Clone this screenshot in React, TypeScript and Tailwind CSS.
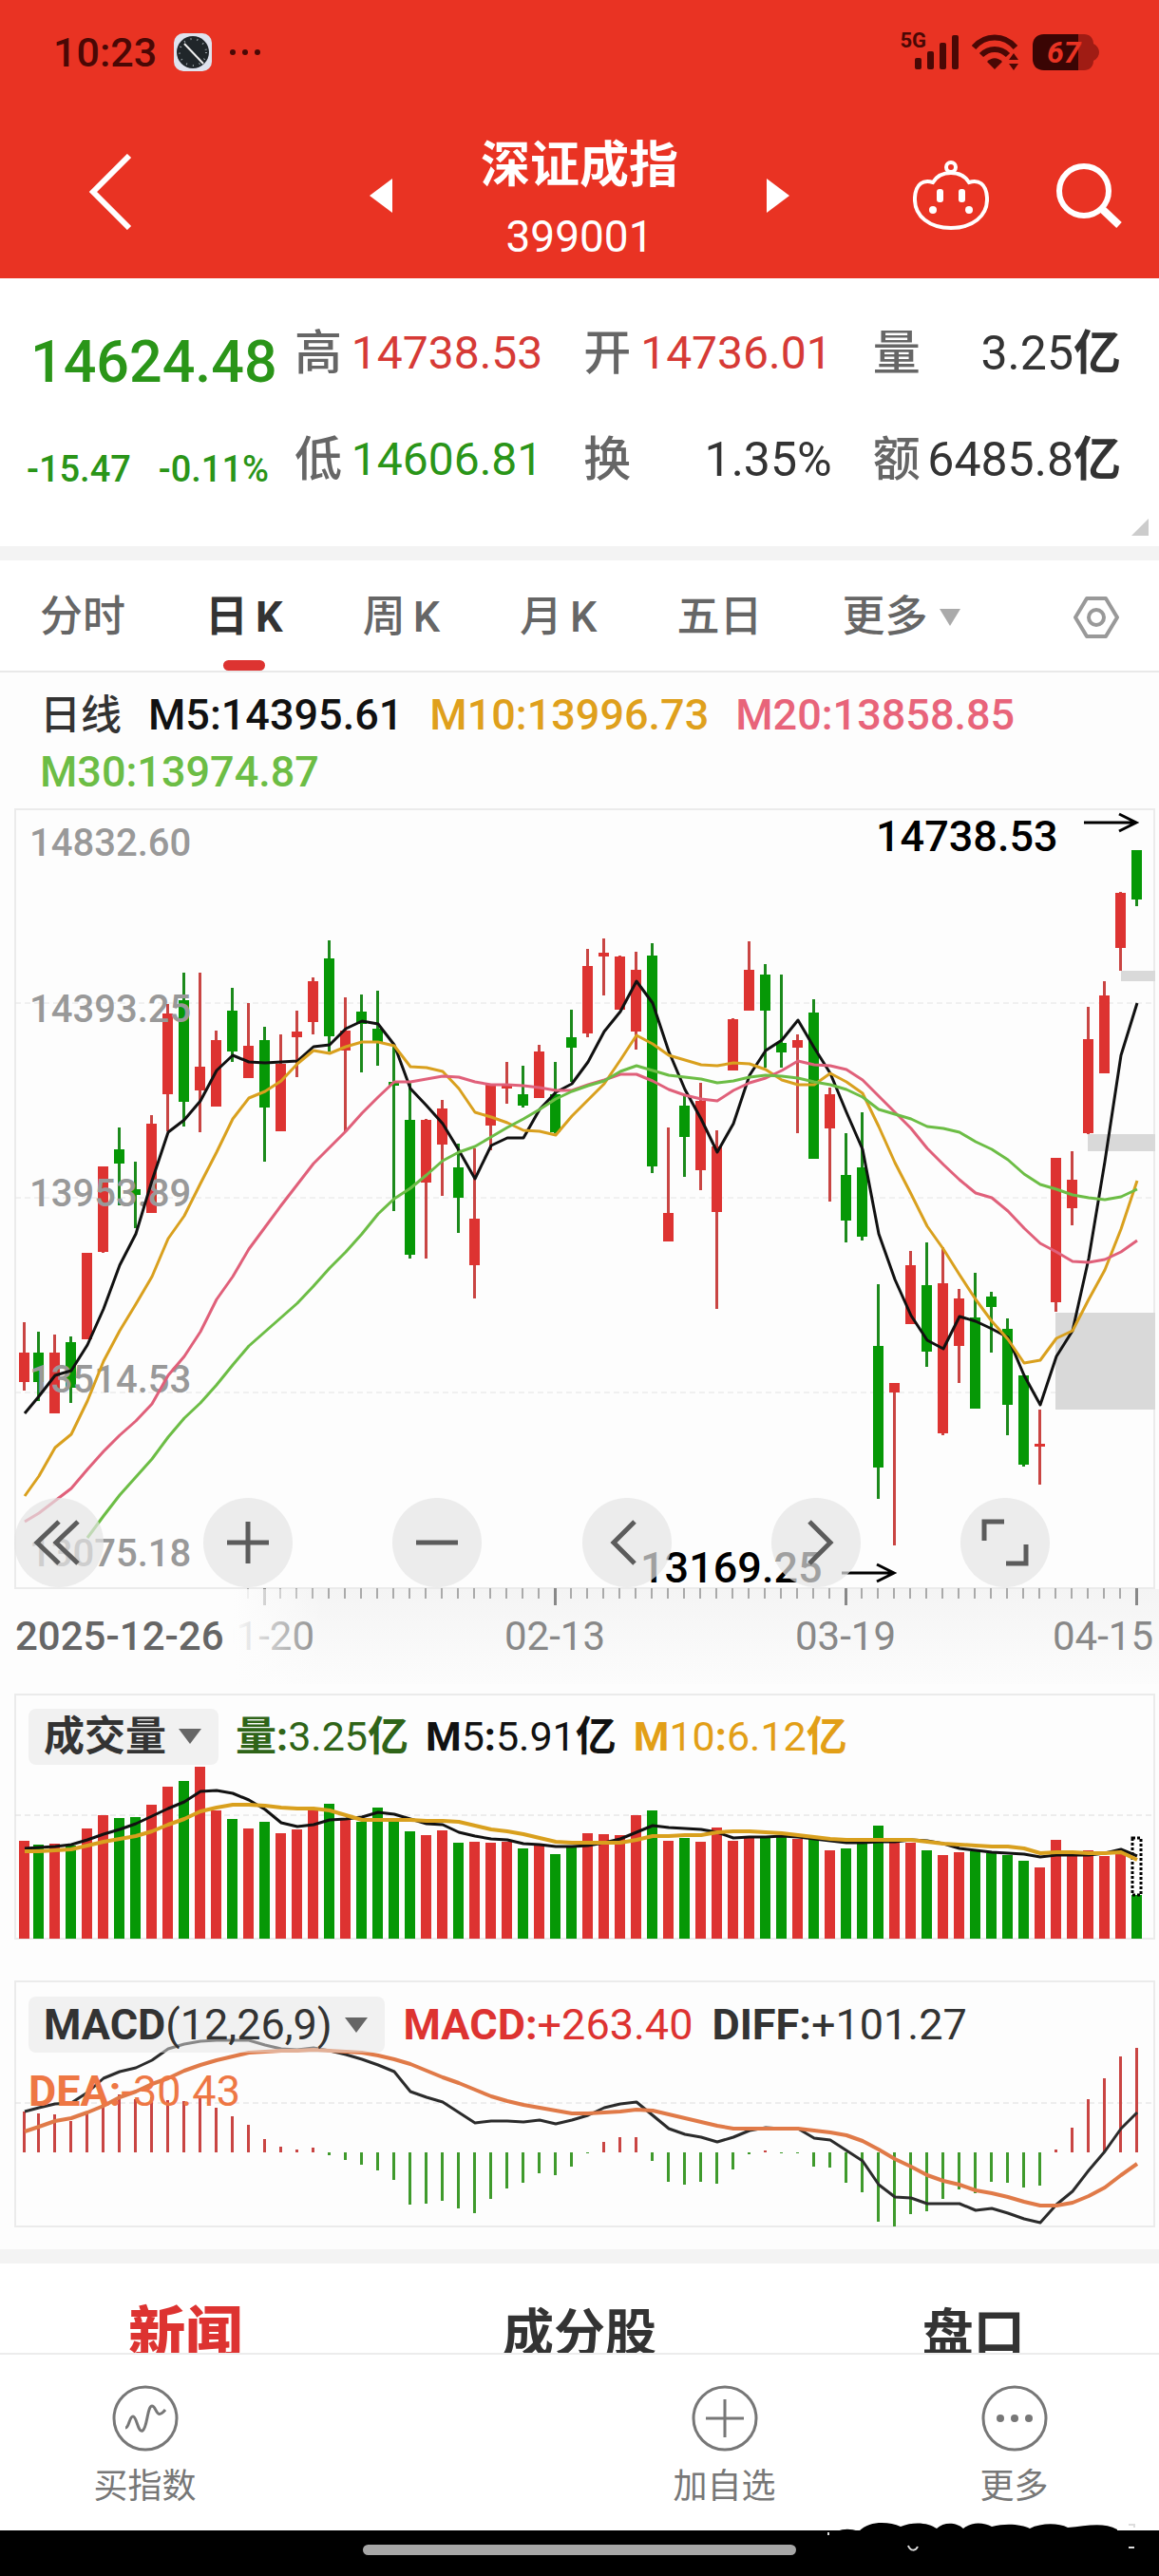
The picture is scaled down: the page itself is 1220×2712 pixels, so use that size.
import { useState, type ReactNode } from "react";

type Candle = [up: number, high: number, top: number, bottom: number, low: number]

const RED = "#dd3331"
const GREEN = "#069806"

const candles: Candle[] = [
    [1, 1029, 1090, 1148, 1164], [0, 1049, 1090, 1148, 1185], [1, 1055, 1090, 1210, 1210], [0, 1057, 1070, 1158, 1188], [1, 894, 894, 1063, 1063],
    [1, 723, 723, 891, 893], [0, 648, 691, 718, 800], [0, 715, 768, 780, 845], [1, 623, 640, 815, 815], [1, 404, 424, 581, 655],
    [0, 343, 398, 597, 645], [1, 343, 528, 574, 656], [1, 457, 476, 606, 607], [0, 373, 418, 497, 518], [1, 402, 487, 550, 550],
    [0, 450, 476, 608, 714], [1, 465, 522, 655, 655], [1, 418, 459, 469, 548], [1, 353, 360, 440, 464], [0, 280, 315, 468, 498],
    [1, 392, 457, 496, 655], [0, 385, 420, 444, 539], [0, 379, 454, 480, 525], [0, 487, 558, 565, 811], [0, 560, 633, 898, 904],
    [1, 631, 633, 755, 904], [1, 594, 609, 681, 781], [0, 679, 726, 785, 854], [1, 688, 827, 918, 983], [1, 562, 564, 643, 692],
    [1, 519, 565, 570, 600], [0, 526, 582, 604, 608], [1, 485, 498, 589, 589], [0, 519, 582, 656, 658], [0, 416, 470, 490, 557],
    [1, 297, 329, 462, 469], [1, 276, 304, 311, 388], [1, 310, 312, 415, 416], [1, 301, 338, 458, 494], [0, 286, 310, 723, 737],
    [1, 648, 816, 871, 871], [0, 585, 605, 665, 744], [1, 559, 595, 731, 770], [1, 653, 685, 813, 1003], [1, 433, 435, 535, 535],
    [1, 282, 338, 417, 417], [0, 327, 346, 417, 529], [0, 347, 482, 499, 529], [1, 465, 476, 490, 658], [0, 396, 422, 708, 709],
    [1, 568, 581, 649, 792], [0, 659, 741, 830, 873], [0, 618, 726, 861, 869], [0, 956, 1077, 1315, 1377], [1, 1150, 1150, 1168, 1468],
    [1, 889, 918, 1034, 1034], [0, 874, 958, 1087, 1117], [1, 883, 954, 1248, 1252], [1, 965, 984, 1076, 1149], [0, 933, 1021, 1199, 1199],
    [0, 971, 980, 1000, 1089], [0, 1023, 1043, 1192, 1252], [0, 1134, 1134, 1309, 1314], [1, 1202, 1268, 1274, 1350], [1, 707, 707, 990, 1010],
    [1, 694, 749, 806, 839], [1, 411, 474, 658, 660], [1, 360, 388, 540, 541], [1, 185, 187, 294, 339], [0, 103, 103, 199, 213],
]

const ma5 = [1210, 1175, 1135, 1126, 1075, 1003, 918, 856, 752, 657, 633, 595, 535, 506, 519, 521, 519, 517, 489, 485, 453, 438, 443, 485, 570, 605, 640, 692, 748, 683, 668, 668, 612, 578, 562, 518, 458, 419, 359, 402, 497, 572, 630, 695, 640, 545, 496, 476, 437, 490, 540, 618, 690, 857, 945, 1017, 1066, 1083, 1018, 1028, 1043, 1060, 1134, 1192, 1097, 1047, 905, 715, 505, 402]
const ma10 = [1371, 1333, 1276, 1250, 1185, 1107, 1047, 995, 940, 866, 820, 757, 695, 630, 589, 577, 555, 523, 496, 501, 488, 479, 480, 487, 527, 529, 537, 570, 617, 626, 637, 653, 655, 663, 624, 594, 562, 514, 467, 483, 506, 515, 524, 526, 521, 522, 533, 553, 564, 564, 541, 557, 580, 645, 717, 778, 842, 886, 936, 985, 1028, 1063, 1110, 1104, 1062, 1046, 985, 928, 847, 752]
const ma20 = [1422, 1405, 1380, 1357, 1320, 1284, 1252, 1224, 1190, 1135, 1097, 1048, 986, 940, 887, 843, 801, 759, 719, 686, 655, 619, 588, 558, 557, 552, 547, 548, 558, 563, 563, 566, 568, 574, 575, 564, 553, 543, 542, 555, 573, 584, 591, 595, 575, 560, 550, 535, 517, 524, 525, 534, 553, 585, 618, 650, 688, 720, 750, 776, 786, 811, 845, 875, 891, 911, 912, 906, 892, 870]
const ma30 = [1453, 1410, 1370, 1335, 1299, 1255, 1219, 1188, 1153, 1114, 1077, 1048, 1021, 992, 959, 924, 892, 857, 818, 788, 767, 740, 713, 695, 685, 666, 648, 630, 611, 592, 577, 566, 555, 538, 526, 536, 544, 548, 552, 559, 556, 548, 545, 546, 551, 558, 563, 573, 588, 611, 621, 631, 645, 650, 656, 675, 691, 711, 738, 760, 768, 780, 786, 789, 784, 768]

const volume = [504, 516, 513, 520, 464, 423, 432, 429, 390, 333, 315, 270, 408, 435, 464, 444, 480, 468, 402, 387, 438, 444, 399, 443, 474, 486, 471, 510, 507, 510, 506, 528, 520, 546, 522, 480, 483, 486, 423, 408, 504, 495, 507, 462, 504, 496, 495, 490, 498, 498, 534, 528, 514, 456, 504, 510, 534, 549, 540, 538, 544, 548, 567, 588, 501, 548, 534, 552, 540, 675]
const volMa5 = [528, 524, 522, 516, 502, 484, 468, 450, 426, 402, 380, 348, 345, 353, 375, 404, 446, 459, 453, 438, 435, 430, 414, 419, 435, 450, 453, 476, 489, 497, 500, 512, 516, 521, 521, 520, 511, 498, 476, 457, 462, 465, 468, 477, 494, 491, 491, 489, 493, 499, 505, 511, 511, 507, 506, 500, 503, 512, 527, 535, 541, 544, 547, 554, 549, 549, 548, 544, 531, 553]
const volMa10 = [537, 536, 534, 531, 518, 508, 497, 488, 473, 453, 436, 411, 399, 390, 390, 392, 399, 402, 403, 408, 422, 437, 437, 437, 438, 440, 440, 443, 455, 467, 473, 483, 495, 508, 510, 511, 510, 509, 501, 490, 488, 486, 485, 477, 475, 475, 476, 479, 485, 493, 497, 500, 501, 500, 501, 502, 507, 512, 516, 519, 521, 522, 527, 542, 541, 541, 543, 543, 541, 563]

const macd = [460, 466, 468, 488, 463, 423, 405, 420, 415, 422, 427, 417, 448, 474, 500, 547, 570, 579, 573, 596, 612, 627, 644, 674, 752, 750, 740, 764, 779, 734, 701, 685, 653, 660, 633, 590, 555, 541, 541, 616, 681, 691, 681, 687, 642, 595, 581, 590, 590, 634, 637, 683, 713, 808, 822, 782, 773, 734, 704, 716, 681, 683, 699, 692, 578, 510, 420, 353, 285, 258]
const diff = [458, 447, 436, 432, 400, 355, 334, 322, 298, 260, 247, 238, 234, 233, 234, 250, 262, 263, 257, 268, 280, 293, 311, 334, 397, 414, 429, 461, 494, 488, 488, 491, 486, 497, 486, 470, 447, 435, 430, 470, 513, 530, 540, 554, 540, 518, 511, 512, 513, 542, 548, 583, 616, 690, 729, 731, 749, 750, 750, 770, 765, 780, 799, 809, 754, 712, 646, 584, 512, 461]
const dea = [521, 506, 490, 480, 463, 440, 415, 395, 373, 353, 331, 312, 297, 284, 273, 269, 266, 266, 265, 267, 269, 273, 282, 294, 309, 329, 350, 370, 390, 410, 425, 437, 448, 457, 464, 466, 461, 458, 453, 455, 467, 480, 492, 504, 513, 513, 512, 512, 513, 519, 525, 535, 552, 579, 609, 633, 659, 677, 691, 708, 718, 729, 744, 757, 757, 747, 725, 698, 661, 623]

const x = (i: number) => (i === 0 ? 25 : 23 + 17 * i)
const priceY = (v: number) => Math.round((v - 20) * 0.5357)
const volY = (v: number) => Math.round((v - 39) / 3)
const macdY = (v: number) => Math.round((v - 45) / 3)

function linePoints(values: number[], y: (v: number) => number, start = 0) {
    return values.map((v, i) => `${x(i + start) + 1},${y(v)}`).join(" ")
}

function Line({ values, y, color, start = 0, width = 3 }: { values: number[], y: (v: number) => number, color: string, start?: number, width?: number }) {
    return <polyline points={linePoints(values, y, start)} fill="none" stroke={color} strokeWidth={width} strokeLinejoin="round" />
}

function StatusBar() {
    return (
        <div className="flex h-[110px] items-center justify-between pl-[56px] pr-[63px] text-[#4a0805]">
            <div className="flex items-center gap-[18px]">
                <span className="text-[43px] font-medium">10:23</span>
                <svg className="size-10" viewBox="0 0 40 40">
                    <rect width="40" height="40" rx="10" fill="#dfe3ee" />
                    <circle cx="20" cy="20" r="17" fill="#20262a" />
                    <circle cx="20" cy="20" r="14" fill="none" stroke="#9aa3a8" strokeWidth="2" strokeDasharray="1 6" />
                    <path d="M11 11 31 32" stroke="#eee" strokeWidth="2" />
                </svg>
                <svg className="h-2 w-[34px]" viewBox="0 0 34 8" fill="currentColor">
                    <circle cx="4" cy="4" r="3" />
                    <circle cx="17" cy="4" r="3" />
                    <circle cx="30" cy="4" r="3" />
                </svg>
            </div>
            <div className="flex items-center gap-[14px]">
                <div className="flex items-start">
                    <span className="-mr-[14px] text-[22px] font-bold leading-4">5G</span>
                    <svg className="h-10 w-[48px]" viewBox="0 0 48 40" fill="currentColor">
                        <rect x="2" y="26" width="7" height="12" rx="2" />
                        <rect x="15" y="19" width="7" height="19" rx="2" />
                        <rect x="28" y="10" width="7" height="28" rx="2" />
                        <rect x="41" y="2" width="7" height="36" rx="2" />
                    </svg>
                </div>
                <svg className="h-10 w-[50px]" viewBox="0 0 50 40" fill="none" stroke="currentColor" strokeWidth="6">
                    <path d="M2 15C14 1 34 1 46 15" />
                    <path d="M10 23c8-8 20-8 28 0" />
                    <path d="m24 38-8-8c5-5 11-5 16 0z" fill="currentColor" stroke="none" />
                    <path d="m44 21 5 7H39zM44 39l5-7H39z" fill="currentColor" stroke="none" />
                </svg>
                <svg className="h-[38px] w-[70px]" viewBox="0 0 70 38">
                    <path d="M46 0h8c6 0 10 4 10 10 8 4 8 14 0 18 0 6-4 10-10 10h-8z" fill="#a01c14" />
                    <path d="M12 0h36v38H12C4 38 0 33 0 26V12C0 5 4 0 12 0z" fill="#3a0504" />
                    <text x="15" y="30" fontSize="32" fontStyle="italic" fontWeight="700" fill="#e93323">67</text>
                </svg>
            </div>
        </div>
    )
}

function NavBar() {
    return (
        <div className="flex h-[183px] items-center text-white">
            <div className="flex flex-1">
                <button className="ml-[92px]" aria-label="返回">
                    <svg className="h-20 w-12" viewBox="0 0 48 80" fill="none" stroke="currentColor" strokeWidth="6">
                        <path d="M44 2 6 40l38 38" />
                    </svg>
                </button>
            </div>
            <div className="flex w-[443px] items-center justify-between pt-2">
                <button aria-label="上一个">
                    <svg className="h-9 w-6" viewBox="0 0 24 36" fill="currentColor"><path d="M24 0v36L0 18z" /></svg>
                </button>
                <div className="text-center">
                    <h1 className="text-[52px] font-bold leading-[86px]">深证成指</h1>
                    <p className="text-[46px] leading-[62px]">399001</p>
                </div>
                <button aria-label="下一个">
                    <svg className="h-9 w-6" viewBox="0 0 24 36" fill="currentColor"><path d="M0 0v36l24-18z" /></svg>
                </button>
            </div>
            <div className="flex flex-1 items-center justify-end gap-[70px] pt-2">
                <button aria-label="智能助手">
                    <svg className="h-[74px] w-20" viewBox="0 0 80 74" fill="none" stroke="currentColor" strokeWidth="4">
                        <circle cx="40" cy="7" r="5" />
                        <path d="M40 13c-10 0-16 5-19 10C11 20 3 24 2 39c-1 20 16 32 38 32s39-12 38-32C77 24 69 20 59 23c-3-5-9-10-19-10z" />
                        <g fill="currentColor" stroke="none">
                            <rect x="25" y="30" width="7" height="14" rx="3" />
                            <rect x="48" y="30" width="7" height="14" rx="3" />
                            <circle cx="21" cy="52" r="4" />
                            <circle cx="59" cy="52" r="4" />
                        </g>
                    </svg>
                </button>
                <button className="mr-[37px]" aria-label="搜索">
                    <svg className="size-[72px]" viewBox="0 0 72 72" fill="none" stroke="currentColor" strokeWidth="6">
                        <circle cx="30" cy="31" r="26" />
                        <path d="m49 50 18 17" strokeWidth="8" />
                    </svg>
                </button>
            </div>
        </div>
    )
}

const quotes = [
    { label: "高", value: "14738.53", style: "text-[48px] text-[#d63a36]" },
    { label: "开", value: "14736.01", style: "text-[48px] text-[#d63a36]" },
    { label: "量", value: "3.25", unit: "亿", style: "text-[50px] text-[#333]" },
    { label: "低", value: "14606.81", style: "text-[48px] text-[#2a9518]" },
    { label: "换", value: "1.35%", style: "text-[50px] text-[#333]" },
    { label: "额", value: "6485.8", unit: "亿", style: "text-[50px] text-[#333]" },
]

function Quote() {
    return (
        <section className="relative flex bg-white pb-[20px] pl-[28px] pr-[40px] pt-[23px]">
            <div className="mr-[19px] w-[263px] shrink-0 whitespace-nowrap text-[#2a9518]">
                <p className="pl-1 pt-[13px] text-[61px] font-medium leading-[104px]">14624.48</p>
                <p className="flex justify-between pr-2 text-[38px] font-medium leading-[122px]">
                    <span>-15.47</span>
                    <span>-0.11%</span>
                </p>
            </div>
            <dl className="grid flex-1 grid-cols-3 content-start gap-x-[43px] whitespace-nowrap">
                {quotes.map(q => (
                    <div key={q.label} className="flex h-[112px] items-center justify-between">
                        <dt className="text-[50px] font-medium text-[#666]">{q.label}</dt>
                        <dd className={q.style}>{q.value}{q.unit && <b>{q.unit}</b>}</dd>
                    </div>
                ))}
            </dl>
            <svg className="absolute bottom-[11px] right-[11px] size-[18px]" viewBox="0 0 18 18" fill="#ccc"><path d="M18 0v18H0z" /></svg>
        </section>
    )
}

const periods = ["分时", "日K", "周K", "月K", "五日"]

function PeriodTabs() {
    const [active, setActive] = useState("日K")

    return (
        <nav className="flex h-[118px] items-stretch border-b-2 border-[#e9e9e9] bg-white px-[42px] pt-1 text-[45px] text-[#666]">
            <div className="flex gap-[84px]">
                {periods.map(p => (
                    <button
                        key={p}
                        className={`relative ${p === active ? "font-bold text-[#333]" : "font-medium"}`}
                        onClick={() => setActive(p)}>
                        {p.replace("K", "")}
                        {p.includes("K") && <span className="ml-2">K</span>}
                        {p === active && <span className="absolute bottom-0 left-1/2 h-[11px] w-11 -translate-x-1/2 rounded-full bg-[#dd3331]" />}
                    </button>
                ))}
                <button className="flex items-center gap-3 font-medium" aria-haspopup="menu">
                    更多
                    <svg className="h-[18px] w-[22px]" viewBox="0 0 22 18" fill="#aaa"><path d="M0 0h22L11 18z" /></svg>
                </button>
            </div>
            <button className="ml-auto" aria-label="设置">
                <svg className="h-[46px] w-12" viewBox="0 0 48 46" fill="none" stroke="#999" strokeWidth="4">
                    <path d="M14 3h20l12 20-12 20H14L2 23z" strokeLinejoin="round" />
                    <circle cx="24" cy="23" r="8" />
                </svg>
            </button>
        </nav>
    )
}

function AverageLegend() {
    return (
        <div className="flex flex-wrap gap-x-[28px] px-[42px] pb-[8px] pt-[15px] text-[45px] font-medium leading-[60px]">
            <span className="text-[43px] text-[#333]">日线</span>
            <span className="text-[#111]">M5:14395.61</span>
            <span className="text-[#dfa01c]">M10:13996.73</span>
            <span className="text-[#e8647a]">M20:13858.85</span>
            <span className="text-[#6cbd45]">M30:13974.87</span>
        </div>
    )
}

const priceLabels = [
    { text: "14832.60", y: 50 },
    { text: "14393.25", y: 225 },
    { text: "13953.89", y: 419 },
    { text: "13514.53", y: 615 },
    { text: "13075.18", y: 798 },
]

function PriceChart() {
    return (
        <svg className="block w-full" viewBox="0 0 1220 932">
            <defs>
                <linearGradient id="axis-haze" x1="0" y1="0" x2="0" y2="1">
                    <stop offset="0" stopColor="#f4f4f4" />
                    <stop offset="1" stopColor="#fcfcfc" />
                </linearGradient>
                <linearGradient id="date-fade" x1="0" y1="0" x2="1" y2="0">
                    <stop offset="0.72" stopColor="#fdfdfd" />
                    <stop offset="1" stopColor="#fdfdfd" stopOpacity="0" />
                </linearGradient>
            </defs>
            <rect x="16" y="1" width="1199" height="820" fill="#fdfdfd" stroke="#ebebeb" strokeWidth="2" />
            {[205, 410, 615].map(y => <path key={y} d={`M16 ${y}h1199`} stroke="#e4e4e4" strokeWidth="1" strokeDasharray="6 4" />)}
            <g fill="#d9d9d9">
                <rect x="1180" y="171" width="36" height="11" />
                <rect x="1145" y="343" width="71" height="18" />
                <rect x="1111" y="531" width="105" height="102" />
            </g>
            {candles.map(([up, high, top, bottom, low], i) => (
                <g key={i} fill={up ? RED : GREEN}>
                    <rect x={x(i) - 1} y={priceY(high)} width="3" height={priceY(low) - priceY(high)} fill={up ? "#c94543" : "#1c8a1c"} />
                    <rect x={x(i) - 5} y={priceY(top)} width="11" height={Math.max(3, priceY(bottom) - priceY(top))} />
                </g>
            ))}
            <g fontSize="40" fill="#999" fontWeight="500">
                {priceLabels.map(l => <text key={l.text} x="31" y={l.y}>{l.text}</text>)}
            </g>
            <Line values={ma5} y={priceY} color="#111" />
            <Line values={ma10} y={priceY} color="#d9a01e" />
            <Line values={ma20} y={priceY} color="#e0607a" />
            <Line values={ma30} y={priceY} color="#6cbd45" start={4} />
            <g fontSize="45" fontWeight="500">
                <text x="922" y="45">14738.53</text>
                <text x="674" y="815">13169.25</text>
            </g>
            <g fill="none" stroke="#000" strokeWidth="3">
                <path d="M1141 15h55M1178 6l18 9-18 9" />
                <path d="M886 805h55M923 796l18 9-18 9" />
            </g>
            <rect x="0" y="822" width="1220" height="100" fill="url(#axis-haze)" />
            {candles.map((_, i) => {
                const major = (i - 15) % 18 === 0
                return i >= 14 && <rect key={i} x={x(i) - 1} y="821" width={major ? 3 : 2} height={major ? 18 : 11} fill={major ? "#888" : "#aaa"} />
            })}
            <g fontSize="42" fill="#888" textAnchor="middle">
                <text x="278" y="886">01-20</text>
                <text x="584" y="886">02-13</text>
                <text x="890" y="886">03-19</text>
                <text x="1214" y="886" textAnchor="end">04-15</text>
            </g>
            <rect x="0" y="822" width="340" height="110" fill="url(#date-fade)" />
            <text x="16" y="886" fontSize="42" fill="#666" fontWeight="500">2025-12-26</text>
        </svg>
    )
}

const tools: { label: string, icon: ReactNode }[] = [
    { label: "最早", icon: <path d="M47 25 24 47l23 22M67 25 44 47l23 22" /> },
    { label: "放大", icon: <path d="M25 47h44M47 25v44" /> },
    { label: "缩小", icon: <path d="M25 47h44" /> },
    { label: "左移", icon: <path d="M55 25 33 47l22 22" /> },
    { label: "右移", icon: <path d="M40 25l22 22-22 22" /> },
    { label: "全屏", icon: <path d="M25 45V25h21M69 49v20H48" /> },
]

function ChartTools() {
    return (
        <div className="absolute left-[15px] right-[115px] top-[726px] flex justify-between">
            {tools.map(t => (
                <button key={t.label} aria-label={t.label} className="size-[94px] rounded-full bg-[#e4e4e4]/70">
                    <svg viewBox="0 0 94 94" fill="none" stroke="#5c5c5c" strokeWidth="5">{t.icon}</svg>
                </button>
            ))}
        </div>
    )
}

// letters and units are bold, the digits stay regular
function Figure({ text, className = "" }: { text: string, className?: string }) {
    return (
        <span className={className}>
            {text.split(/([0-9.,+()-]+)/).map((part, i) => i % 2 ? part : <b key={i}>{part}</b>)}
        </span>
    )
}

function IndicatorButton({ text }: { text: string }) {
    return (
        <button className="flex h-[59px] items-center gap-[13px] rounded-lg bg-[#e5e5e5]/50 pl-[16px] pr-[18px] text-[#333]" aria-haspopup="menu">
            <Figure text={text} />
            <svg className="h-4 w-6" viewBox="0 0 24 16" fill="#666"><path d="M0 0h24L12 16z" /></svg>
        </button>
    )
}

function VolumeChart() {
    return (
        <section className="relative">
            <svg className="block w-full" viewBox="0 0 1220 302">
                <rect x="16" y="1" width="1199" height="257" fill="#fdfdfd" stroke="#ebebeb" strokeWidth="2" />
                <path d="M16 128h1199" stroke="#dcdcdc" strokeDasharray="6 4" />
                {volume.map((v, i) => (
                    <rect key={i} x={x(i) - 5} y={volY(v)} width="11" height={258 - volY(v)} fill={candles[i][0] ? RED : GREEN} />
                ))}
                <rect x="1192" y="152" width="9" height="60" fill="#fff" stroke="#000" strokeWidth="3" strokeDasharray="3 2" />
                <Line values={volMa5} y={volY} color="#111" />
                <Line values={volMa10} y={volY} color="#d9a01e" width={4} />
            </svg>
            <div className="absolute left-[30px] top-[13px] flex items-center gap-[18px] whitespace-nowrap text-[43px]">
                <IndicatorButton text="成交量" />
                <Figure text="量:3.25亿" className="text-[#2f6418]" />
                <Figure text="M5:5.91亿" className="text-[#111]" />
                <Figure text="M10:6.12亿" className="text-[#e29f17]" />
            </div>
        </section>
    )
}

function MacdChart() {
    const zero = macdY(587)

    return (
        <section className="relative">
            <svg className="block w-full" viewBox="0 0 1220 283">
                <rect x="16" y="1" width="1199" height="258" fill="#fdfdfd" stroke="#ebebeb" strokeWidth="2" />
                <path d="M16 129h1199" stroke="#dcdcdc" strokeDasharray="6 4" />
                {macd.map((v, i) => (
                    <rect
                        key={i}
                        x={x(i) - 1}
                        y={Math.min(zero, macdY(v))}
                        width="3"
                        height={Math.max(1, Math.abs(macdY(v) - zero))}
                        fill={v < 587 ? "#c94543" : "#3f9a2c"} />
                ))}
                <Line values={diff} y={macdY} color="#2b2b2b" />
                <Line values={dea} y={macdY} color="#e07a48" width={4} />
            </svg>
            <div className="absolute left-[30px] top-[13px] whitespace-nowrap text-[45px]">
                <div className="flex items-center gap-[20px]">
                    <IndicatorButton text="MACD(12,26,9)" />
                    <Figure text="MACD:+263.40" className="text-[#dd3331]" />
                    <Figure text="DIFF:+101.27" className="text-[#333]" />
                </div>
                <div className="leading-[72px]">
                    <Figure text="DEA:-30.43" className="text-[#ee7744]" />
                </div>
            </div>
        </section>
    )
}

function InfoTabs() {
    return (
        <div className="h-[94px] overflow-hidden bg-white">
            <nav className="-mx-3 grid grid-cols-3 pt-[35px] text-[54px] leading-[80px] text-[#333]">
                <button className="h-20 text-[60px] font-black text-[#dd3331]">新闻</button>
                <button className="h-20 font-bold">成分股</button>
                <button className="h-20 font-bold">盘口</button>
            </nav>
        </div>
    )
}

function BottomItem({ label, children, className = "" }: { label: string, children: ReactNode, className?: string }) {
    return (
        <button className={`flex flex-col items-center gap-[10px] pt-[31px] text-[36px] leading-[52px] text-[#777] ${className}`}>
            <svg className="size-[72px]" viewBox="0 0 72 72" fill="none" stroke="#777" strokeWidth="3">
                <circle cx="36" cy="36" r="33" />
                {children}
            </svg>
            {label}
        </button>
    )
}

function BottomBar() {
    return (
        <footer>
            <div className="grid h-[187px] grid-cols-4 border-t-2 border-[#ececec] bg-white">
                <BottomItem label="买指数">
                    <path d="M15 46c4 0 4-12 8-12s5 17 10 15 5-26 10-26 4 16 14 4" />
                </BottomItem>
                <BottomItem label="加自选" className="col-start-3">
                    <path d="M16 36h40M36 16v40" />
                </BottomItem>
                <BottomItem label="更多">
                    <g fill="#777" stroke="none">
                        <circle cx="21" cy="36" r="4" />
                        <circle cx="36" cy="36" r="4" />
                        <circle cx="51" cy="36" r="4" />
                    </g>
                </BottomItem>
            </div>
            <div className="relative flex h-12 justify-center bg-black pt-[15px]">
                <span className="h-[11px] w-[456px] rounded-full bg-[#a6a6a6]" />
                <svg className="absolute -top-4 right-[24px] h-[50px] w-[330px]" viewBox="0 0 330 50">
                    <path d="M8 22c6-6 16-10 30-5 12-12 32-10 44-5 14-6 30-4 38 2 8-8 22-6 28 0 10-8 22-6 30-2 16-4 32-2 40 2 12-6 30-6 40-1 20-2 38-6 52 2v25H8z" fill="#000" />
                    <path d="M322 10h6v3M328 34h-6M90 32c2 6 8 6 10 1M6 18v3" stroke="#ddd" strokeWidth="2" fill="none" />
                </svg>
            </div>
        </footer>
    )
}

export default function App() {
    return (
        <div className="w-full bg-[#fdfdfd] font-[Roboto,'Noto_Sans_CJK_SC',sans-serif]">
            <header className="bg-[#e93323]">
                <StatusBar />
                <NavBar />
            </header>
            <main>
                <Quote />
                <div className="h-[15px] bg-[#f3f3f3]" />
                <PeriodTabs />
                <AverageLegend />
                <section className="relative">
                    <PriceChart />
                    <ChartTools />
                </section>
                <VolumeChart />
                <MacdChart />
                <div className="h-[15px] bg-[#f3f3f3]" />
                <InfoTabs />
            </main>
            <BottomBar />
        </div>
    );
}
